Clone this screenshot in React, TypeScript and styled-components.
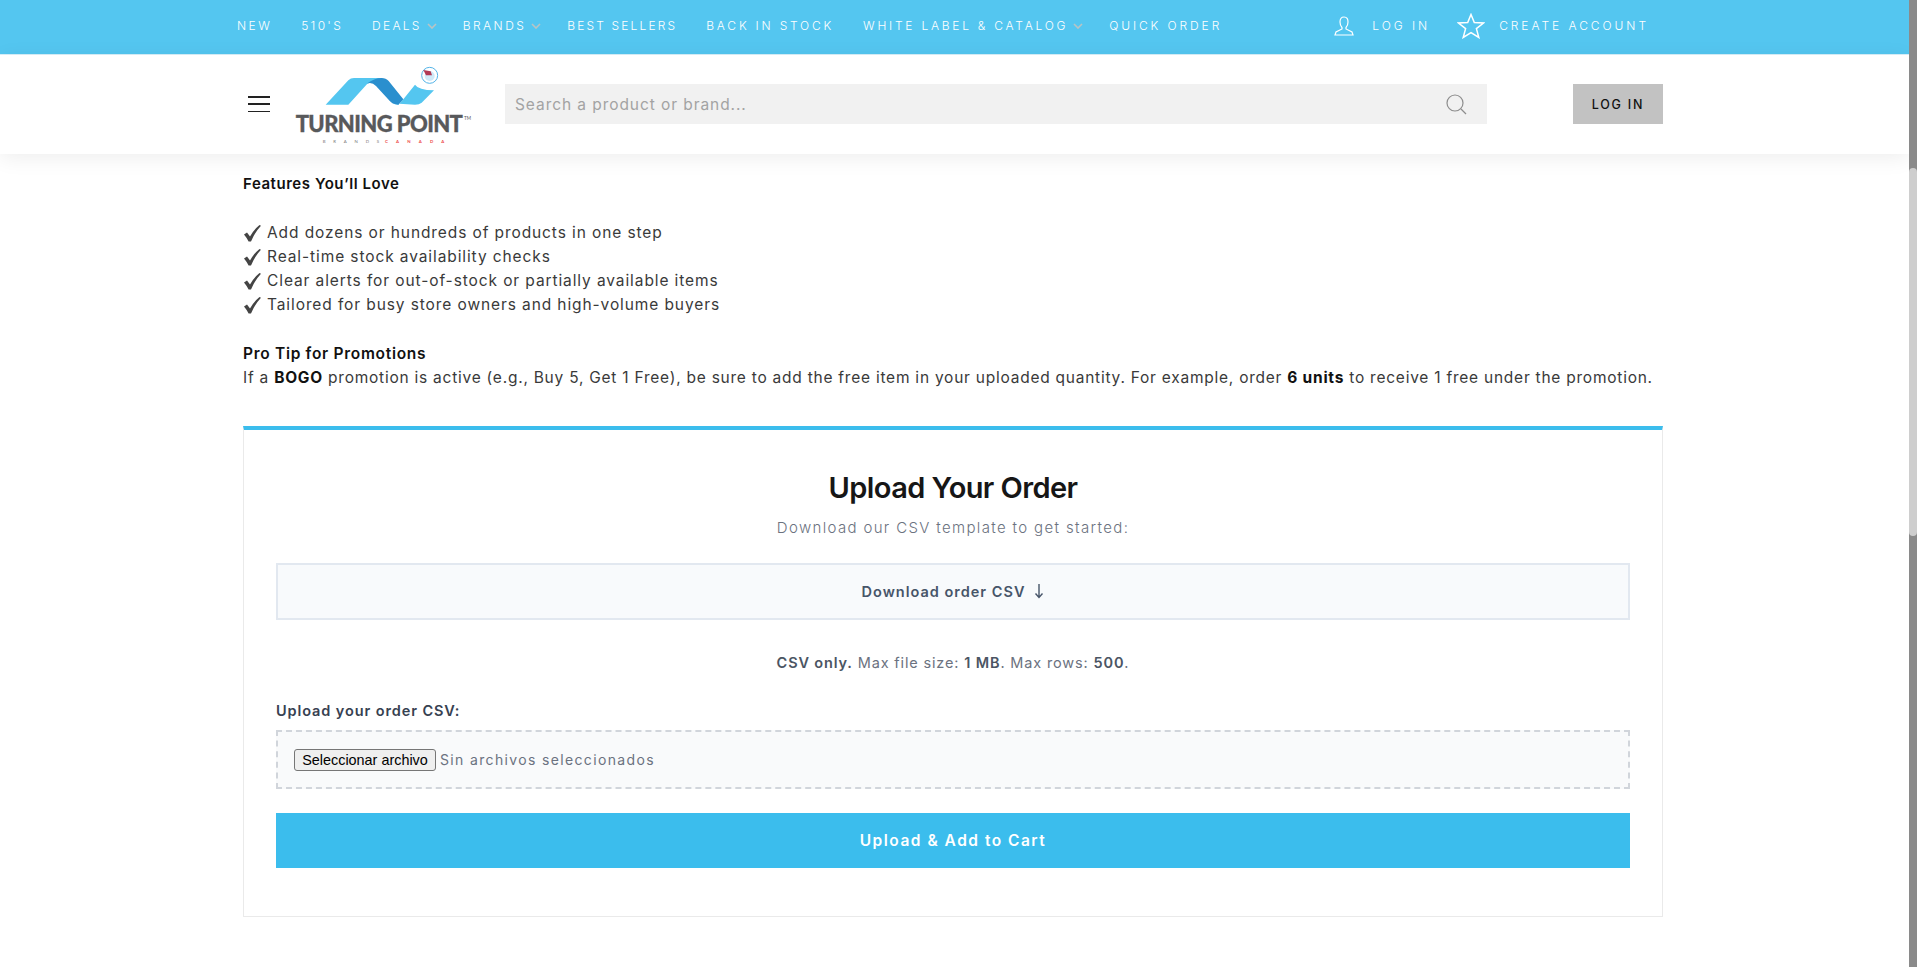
import styled, { createGlobalStyle } from 'styled-components';

const GlobalStyle = createGlobalStyle`
    html, body {
        margin: 0;
        height: 100%;
        overflow: hidden;
        background: #fff;
    }
    body {
        font-family: Inter, "Open Sans", sans-serif;
        color: #3a3a3a;
    }
    * {
        box-sizing: border-box;
    }
`;

const Page = styled.div`
    height: 967px;
    overflow: hidden;
    padding-right: 8px;
`;

const Scrollbar = styled.div`
    position: fixed;
    top: 0;
    right: 0;
    width: 8px;
    height: 967px;
    background: #8a8a8a;
`;

const ScrollThumb = styled.div`
    position: absolute;
    top: 168px;
    left: 0;
    width: 8px;
    height: 368px;
    border-radius: 4px;
    background: #cecece;
`;

const TopBar = styled.div`
    height: 55px;
    background: #54c6f0;
    border-bottom: 1px solid #d8f0fa;
    display: flex;
    align-items: center;
    justify-content: space-between;
    padding: 0 260px 3px 237px;
    color: #fff;
`;

const NavList = styled.nav`
    display: flex;
    align-items: center;
    gap: 29px;
`;

const NavLink = styled.span<{ $spacing?: number }>`
    font-size: 12px;
    font-weight: 300;
    letter-spacing: ${(props) => props.$spacing ?? 2.45}px;
    white-space: nowrap;
    display: flex;
    align-items: center;
`;

const Caret = styled.svg`
    width: 10px;
    height: 6px;
    margin: 0 -3px 0 5px;
    fill: none;
    stroke: #b9c4c4;
    stroke-width: 1.6;
`;

const AccountLinks = styled.div`
    display: flex;
    align-items: center;
    gap: 27px;
`;

const AccountLink = styled(NavLink)<{ $gap: number }>`
    gap: ${(props) => props.$gap}px;
    letter-spacing: 2.95px;
`;

const Header = styled.header`
    height: 99px;
    display: flex;
    align-items: center;
    padding: 0 0 1px 248px;
    background: #fff;
    box-shadow: 0 4px 20px rgba(0, 0, 0, 0.07);
    position: relative;
`;

const Hamburger = styled.div`
    width: 22px;
    height: 16px;
    display: flex;
    flex-direction: column;
    justify-content: space-between;
    margin-right: 10px;
`;

const HamburgerLine = styled.span`
    height: 1.5px;
    background: #222;
`;

const SearchBox = styled.div`
    width: 982px;
    height: 40px;
    margin-left: 15px;
    padding: 0 20px 0 10px;
    background: #f1f1f1;
    display: flex;
    align-items: center;
    justify-content: space-between;
    color: #a3a3a3;
    font-size: 15.5px;
    letter-spacing: 0.93px;
`;

const LoginButton = styled.div`
    width: 90px;
    height: 40px;
    margin-left: 86px;
    background: #c2c2c2;
    color: #111;
    display: flex;
    align-items: center;
    justify-content: center;
    font-size: 12.5px;
    font-weight: 500;
    letter-spacing: 1.8px;
`;

const Main = styled.main`
    width: 1420px;
    margin-left: 243px;
    padding-top: 18px;
`;

const Line = styled.p`
    margin: 0;
    height: 24px;
    line-height: 24px;
    font-size: 15.5px;
    letter-spacing: 0.9px;
    white-space: nowrap;
    display: flex;
    align-items: center;
    gap: 5px;
`;

const Paragraph = styled(Line)`
    display: block;
    letter-spacing: 0.76px;
`;

const Block = styled.div`
    margin-bottom: 25px;
`;

const Heading = styled(Line)<{ $small?: boolean }>`
    font-size: ${(props) => (props.$small ? 15 : 15.5)}px;
    font-weight: 600;
    color: #111;
    letter-spacing: ${(props) => (props.$small ? 0.55 : 0.7)}px;
`;

const Strong = styled.strong`
    font-weight: 700;
    color: #111;
`;

const Check = styled.svg`
    width: 19px;
    height: 18px;
    fill: #444;
    flex: none;
`;

const UploadCard = styled.section`
    height: 491px;
    margin-top: 36px;
    border: 1px solid #eaeaea;
    border-top: 4px solid #3bbded;
    padding: 0 32px;
    background: #fff;
    display: flex;
    flex-direction: column;
`;

const Title = styled.h2`
    margin: 38px 0 0;
    height: 40px;
    line-height: 40px;
    text-align: center;
    font-size: 29px;
    font-weight: 600;
    letter-spacing: -0.6px;
    color: #161616;
`;

const Subtitle = styled.p`
    margin: 8px 0 0;
    height: 24px;
    line-height: 24px;
    text-align: center;
    font-size: 15px;
    font-weight: 300;
    letter-spacing: 1.35px;
    color: #6b7280;
`;

const DownloadBox = styled.div`
    height: 57px;
    margin-top: 23px;
    border: 2px solid #e2e8f0;
    background: #f8fafc;
    display: flex;
    align-items: center;
    justify-content: center;
    gap: 9px;
    color: #475569;
    font-size: 14.5px;
    font-weight: 600;
    letter-spacing: 1px;
`;

const Limits = styled.p`
    margin: 31px 0 0;
    height: 24px;
    line-height: 24px;
    text-align: center;
    font-size: 14.5px;
    letter-spacing: 0.85px;
    color: #6b7280;
`;

const LimitValue = styled.strong`
    font-weight: 600;
    color: #4b5563;
`;

const FieldLabel = styled.label`
    margin-top: 24px;
    height: 24px;
    line-height: 24px;
    font-size: 14.5px;
    font-weight: 600;
    letter-spacing: 0.9px;
    color: #374151;
`;

const DropZone = styled.div`
    height: 59px;
    margin-top: 7px;
    border: 2px dashed #d1d5db;
    background: #f9fafb;
    padding-left: 16px;
    display: flex;
    align-items: center;
    gap: 4px;
    font-size: 14px;
    letter-spacing: 1.35px;
    color: #6b7280;
`;

const FileButton = styled.button`
    width: 142px;
    height: 22px;
    padding: 0;
    border: 1px solid #767676;
    border-radius: 3px;
    background: #efefef;
    color: #000;
    font-family: "Liberation Sans", Arial, sans-serif;
    font-size: 14.4px;
    letter-spacing: 0;
`;

const SubmitButton = styled.button`
    height: 55px;
    margin-top: 24px;
    border: 0;
    background: #3bbded;
    color: #fff;
    font-family: inherit;
    font-size: 15.5px;
    font-weight: 600;
    letter-spacing: 1.5px;
`;

const LogoWrap = styled.svg`
    width: 210px;
    height: 100px;
    display: block;
    margin-top: 11px;
    margin-bottom: -1px;
`;

const Logo = () => (
    <LogoWrap viewBox="0 0 630 300">
        <path d="M137 134 L205 61 Q212 54 222 54 L310 54 L262 71 L205 134 Z" fill="#54c6f0" />
        <path d="M335 130 Q345 134 355 134 L370 118 L405 74 Q415 90 462 91 L425 128 Q418 134 405 134 Z" fill="#54c6f0" />
        <path d="M260 71 Q283 54 305 54 Q318 54 326 63 L370 118 L355 134 Q340 134 330 124 L288 78 Q275 64 260 71 Z" fill="#2a8fce" />
        <circle cx="449" cy="46" r="24" fill="#fff" stroke="#54b4e8" strokeWidth="3" />
        <circle cx="449" cy="48" r="15" fill="#cfe9f8" />
        <path d="M430 30 L452 34 L456 46 L438 46 Z" fill="#b23a55" />
        <text x="47" y="217" fontFamily="Lato, sans-serif" fontWeight="900" fontSize="66" letterSpacing="-1.8" fill="#58595b" stroke="#58595b" strokeWidth="1">TURNING POINT</text>
        <text x="552" y="181" fontFamily="Lato, sans-serif" fontSize="14" fill="#58595b">TM</text>
        <text x="128" y="248" fontFamily="Lato, sans-serif" fontSize="13" letterSpacing="23.5" fill="#777">BRANDS</text>
        <text x="315" y="248" fontFamily="Lato, sans-serif" fontWeight="700" fontSize="13" letterSpacing="24.5" fill="#ed4c4c">CANADA</text>
    </LogoWrap>
);

const Chevron = () => (
    <Caret viewBox="0 0 10 6">
        <path d="M1 1 L5 5 L9 1" />
    </Caret>
);

const CheckMark = () => (
    <Check viewBox="0 0 19 18">
        <path d="M1 10.5 L4 8.6 L7 12.5 Q10.5 6 16.5 1 L18 1.8 Q12 8 8 17.5 L5.6 17.5 Q3.6 13.5 1 10.5 Z" />
    </Check>
);

const navItems: { label: string; caret?: boolean; spacing?: number }[] = [
    { label: 'NEW' },
    { label: "510'S", spacing: 2.3 },
    { label: 'DEALS', caret: true, spacing: 2.3 },
    { label: 'BRANDS', caret: true },
    { label: 'BEST SELLERS', spacing: 2.15 },
    { label: 'BACK IN STOCK', spacing: 2.8 },
    { label: 'WHITE LABEL & CATALOG', caret: true, spacing: 2.75 },
    { label: 'QUICK ORDER', spacing: 2.9 },
];

const features = [
    'Add dozens or hundreds of products in one step',
    'Real-time stock availability checks',
    'Clear alerts for out-of-stock or partially available items',
    'Tailored for busy store owners and high-volume buyers',
];

export default function App() {
    return (
        <Page>
            <GlobalStyle />
            <TopBar>
                <NavList>
                    {navItems.map((item) => (
                        <NavLink key={item.label} $spacing={item.spacing}>
                            {item.label}
                            {item.caret && <Chevron />}
                        </NavLink>
                    ))}
                </NavList>
                <AccountLinks>
                    <AccountLink $gap={18}>
                        <svg width="20" height="20" viewBox="0 0 20 20" fill="none" stroke="#fff" strokeWidth="1.2">
                            <path d="M10 1 C7 1 6 3.2 6 6 C6 8.5 7 10.5 8 11.5 L8 13 L2 16 L1 19 L19 19 L18 16 L12 13 L12 11.5 C13 10.5 14 8.5 14 6 C14 3.2 13 1 10 1 Z" />
                        </svg>
                        LOG IN
                    </AccountLink>
                    <AccountLink $gap={14}>
                        <svg width="28" height="26" viewBox="0 0 28 26" fill="none" stroke="#fff" strokeWidth="1.5">
                            <path d="M14 1.5 L17.3 9.6 L26.5 10 L19.4 15.6 L21.8 24.5 L14 19.6 L6.2 24.5 L8.6 15.6 L1.5 10 L10.7 9.6 Z" />
                        </svg>
                        CREATE ACCOUNT
                    </AccountLink>
                </AccountLinks>
            </TopBar>
            <Header>
                <Hamburger>
                    <HamburgerLine />
                    <HamburgerLine />
                    <HamburgerLine />
                </Hamburger>
                <Logo />
                <SearchBox>
                    Search a product or brand...
                    <svg width="21" height="21" viewBox="0 0 21 21" fill="none" stroke="#8d8d8d" strokeWidth="1.2">
                        <circle cx="9" cy="9" r="8" />
                        <path d="M15 15 L20 20" />
                    </svg>
                </SearchBox>
                <LoginButton>LOG IN</LoginButton>
            </Header>
            <Main>
                <Block>
                    <Heading $small>Features You’ll Love</Heading>
                </Block>
                <Block>
                    {features.map((text) => (
                        <Line key={text}>
                            <CheckMark />
                            {text}
                        </Line>
                    ))}
                </Block>
                <Heading>Pro Tip for Promotions</Heading>
                <Paragraph>
                    If a <Strong>BOGO</Strong> promotion is active (e.g., Buy 5, Get 1 Free), be sure to add the free item in your uploaded quantity. For example, order <Strong>6 units</Strong> to receive 1 free under the promotion.
                </Paragraph>
                <UploadCard>
                    <Title>Upload Your Order</Title>
                    <Subtitle>Download our CSV template to get started:</Subtitle>
                    <DownloadBox>
                        Download order CSV
                        <svg width="10" height="16" viewBox="0 0 10 16" fill="none" stroke="#475569" strokeWidth="1.4">
                            <path d="M5 0 L5 13 M1.5 9.5 L5 13.5 L8.5 9.5" />
                        </svg>
                    </DownloadBox>
                    <Limits>
                        <LimitValue>CSV only.</LimitValue> Max file size: <LimitValue>1 MB</LimitValue>. Max rows: <LimitValue>500</LimitValue>.
                    </Limits>
                    <FieldLabel>Upload your order CSV:</FieldLabel>
                    <DropZone>
                        <FileButton type="button">Seleccionar archivo</FileButton>
                        Sin archivos seleccionados
                    </DropZone>
                    <SubmitButton type="button">Upload &amp; Add to Cart</SubmitButton>
                </UploadCard>
            </Main>
            <Scrollbar>
                <ScrollThumb />
            </Scrollbar>
        </Page>
    );
}
